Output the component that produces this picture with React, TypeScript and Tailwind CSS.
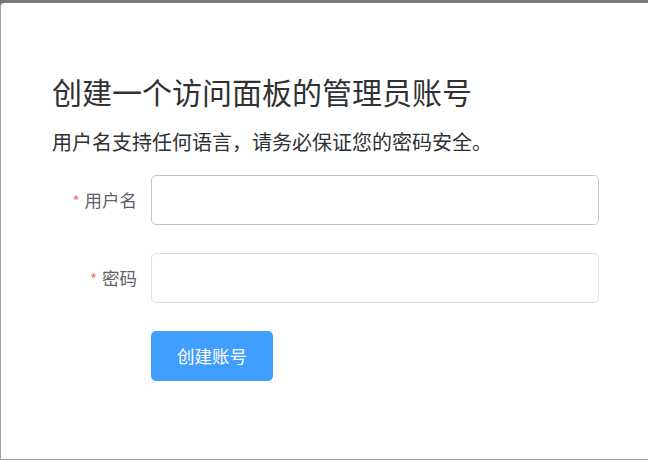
import React from "react";

export default function App() {
  const font = { fontFamily: '"Noto Sans CJK SC", "Noto Sans", sans-serif' };
  return (
    <div className="w-[648px] h-[460px] bg-[#7a7a7a] pt-[3px] overflow-hidden" style={font}>
      <div className="h-[457px] bg-white rounded-tl-[4px] border-l border-b border-[#a0a0a0] pl-[51px] pr-[49px]">
        <div className="pt-[70px] text-[30px] leading-[36px] text-[#303133]">创建一个访问面板的管理员账号</div>
        <div className="mt-[20px] text-[20px] leading-[26px] text-[#303133]">用户名支持任何语言，请务必保证您的密码安全。</div>
        <div className="mt-[20px] flex flex-col">
          <div className="flex items-center h-[50px]">
            <label className="w-[99px] pr-[14px] text-right text-[17.5px] leading-[50px] text-[#606266]">
              <span className="text-[#f56c6c] mr-[5px] text-[15px]">*</span>用户名
            </label>
            <input className="flex-1 h-[50px] rounded-[5px] border border-[#c0c4cc] outline-none px-[19px] text-[17.5px]" />
          </div>
          <div className="flex items-center h-[50px] mt-[28px]">
            <label className="w-[99px] pr-[14px] text-right text-[17.5px] leading-[50px] text-[#606266]">
              <span className="text-[#f56c6c] mr-[5px] text-[15px]">*</span>密码
            </label>
            <input type="password" className="flex-1 h-[50px] rounded-[5px] border border-[#dcdfe6] outline-none px-[19px] text-[17.5px]" />
          </div>
          <div className="flex mt-[28px] pl-[99px]">
            <button className="w-[122px] h-[50px] rounded-[5px] bg-[#409eff] text-white text-[17.5px]">创建账号</button>
          </div>
        </div>
      </div>
    </div>
  );
}
